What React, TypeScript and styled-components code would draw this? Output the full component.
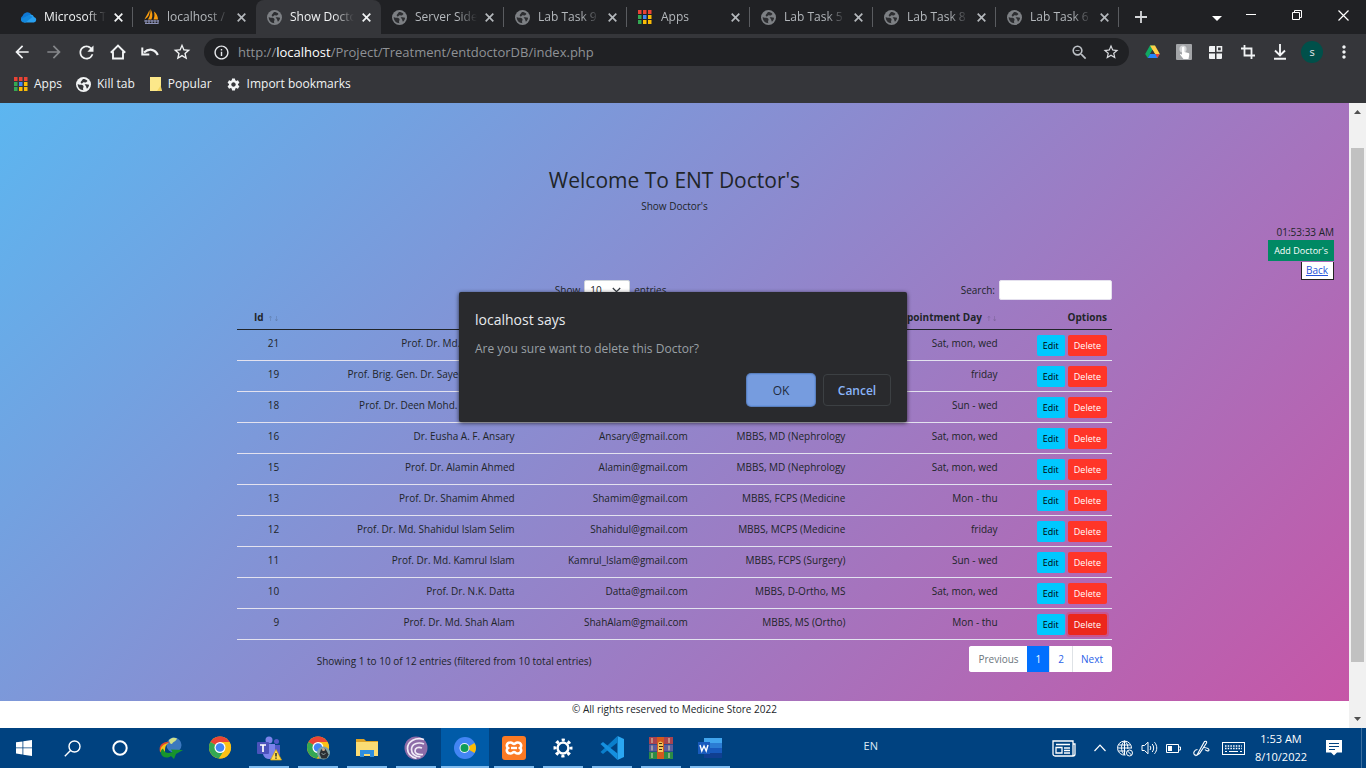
import React from "react";
import styled, { createGlobalStyle, css } from "styled-components";
import {
  MdArrowBack,
  MdArrowForward,
  MdInfoOutline,
  MdMoreVert,
  MdRefresh,
  MdSettings,
  MdStarBorder,
  MdZoomOut,
} from "react-icons/md";

const GlobalStyle = createGlobalStyle`
  *, *::before, *::after { box-sizing: border-box; }
  body {
    margin: 0;
    font-family: "Open Sans", "Noto Sans", sans-serif;
    background: #004280;
  }
  button, input, select { font: inherit; margin: 0; }
  h1, h2, p { margin: 0; }
`;

const Screen = styled.div`
  min-height: 100vh;
  display: flex;
  flex-direction: column;
  overflow: hidden;
`;

/* ---------- browser frame ---------- */

const TabStrip = styled.div`
  display: flex;
  height: 34px;
  padding-left: 10px;
  background: #202124;
`;

const Tab = styled.button<{ $active?: boolean; $bright?: boolean; $divider?: boolean }>`
  display: flex;
  align-items: center;
  gap: 8px;
  width: ${(p) => (p.$active ? 125 : 123)}px;
  flex: none;
  height: 34px;
  padding: 0 10px;
  border: 0;
  background: none;
  color: ${(p) => (p.$active || p.$bright ? "#f1f3f4" : "#b4b8bc")};
  font-size: 12px;
  line-height: 16px;
  text-align: left;
  ${(p) =>
    p.$divider &&
    css`
      background: linear-gradient(#5a5c60, #5a5c60) right center / 1px 20px no-repeat;
    `}
  ${(p) =>
    p.$active &&
    css`
      background: #35363a;
      border-radius: 8px 8px 0 0;
    `}
`;

const TabTitle = styled.span`
  flex: 1;
  min-width: 0;
  overflow: hidden;
  white-space: nowrap;
  mask-image: linear-gradient(to right, #000 68%, transparent);
`;

const IconSlot = styled.span`
  display: inline-flex;
  flex: none;
  width: 16px;
  height: 16px;
  align-items: center;
  justify-content: center;
  svg { display: block; flex: none; }
`;

const StripButton = styled.button<{ $width: number }>`
  display: flex;
  align-items: center;
  justify-content: center;
  width: ${(p) => p.$width}px;
  height: 34px;
  padding: 0;
  border: 0;
  background: none;
  color: #fff;
`;

const WindowButtons = styled.div`
  display: flex;
  margin-left: auto;
  button { height: 30px; }
  button:first-child { height: 36px; }
`;

const Toolbar = styled.div`
  display: flex;
  align-items: center;
  height: 36px;
  padding: 0 6px;
  background: #35363a;
  color: #f1f3f4;
`;

const ToolButton = styled.button<{ $dim?: boolean }>`
  display: flex;
  align-items: center;
  justify-content: center;
  width: 32px;
  height: 28px;
  padding: 0;
  border: 0;
  background: none;
  color: ${(p) => (p.$dim ? "#85878a" : "#f1f3f4")};
`;

const AddressBar = styled.div`
  display: flex;
  align-items: center;
  flex: 1;
  height: 28px;
  margin: 0 7px 0 6px;
  padding: 0 2px 0 9px;
  border-radius: 14px;
  background: #202124;
  color: #e8eaed;
`;

const Url = styled.a`
  flex: 1;
  margin-left: 8px;
  color: #8f9296;
  font-size: 13px;
  line-height: 20px;
  text-decoration: none;
  span { color: #fff; }
`;

const Avatar = styled.span`
  width: 22px;
  height: 22px;
  border-radius: 50%;
  background: #00504a;
  color: #e8eaed;
  font-size: 11px;
  line-height: 22px;
  text-align: center;
`;

const BookmarkBar = styled.nav`
  display: flex;
  align-items: center;
  gap: 14px;
  height: 33px;
  padding: 0 14px 5px;
  background: #35363a;
`;

const Bookmark = styled.a`
  display: flex;
  align-items: center;
  gap: 6px;
  color: #f1f3f4;
  font-size: 12px;
  line-height: 16px;
  text-decoration: none;
`;

/* ---------- page ---------- */

const Viewport = styled.div`
  position: relative;
  display: flex;
  flex: 1;
`;

const Page = styled.main`
  flex: 1;
  display: flex;
  flex-direction: column;
  background: #fff;
  color: #212529;
  font-size: 10px;
  line-height: 16px;
`;

const Hero = styled.div`
  flex: 1;
  padding: 64px 15px 27px;
  background: linear-gradient(135deg, #5cb6f0, #c656a7);
`;

const Heading = styled.h1`
  font-size: 21px;
  line-height: 26px;
  font-weight: 500;
  text-align: center;
`;

const SubHeading = styled.p`
  margin-top: 5px;
  text-align: center;
`;

const Corner = styled.div`
  display: flex;
  flex-direction: column;
  align-items: flex-end;
  margin-top: 10px;
`;

const SmallButton = styled.button<{ $kind: "add" | "edit" | "delete"; $pressed?: boolean }>`
  height: 21px;
  padding: 0 6px;
  border: 0;
  border-radius: ${(p) => (p.$kind === "add" ? 0 : 2)}px;
  font-size: 9px;
  line-height: 21px;
  color: ${(p) => (p.$kind === "edit" ? "#000" : "#fff")};
  background: ${(p) =>
    p.$kind === "add" ? "#008964" : p.$kind === "edit" ? "#00c8ff" : p.$pressed ? "#ec271c" : "#ff3528"};
  ${(p) =>
    p.$pressed &&
    css`
      box-shadow: 0 0 0 2px rgba(230, 60, 90, 0.4);
    `}
`;

const BackLink = styled.a`
  margin-top: 1px;
  padding: 0 5px 0 4px;
  border: 1px solid #222;
  border-width: 0 1px 1px 1px;
  background: #fff;
  color: #2453d8;
  line-height: 17px;
`;

const Listing = styled.section`
  width: 100%;
  max-width: 875px;
  margin: 0 auto;
`;

const Controls = styled.div`
  display: grid;
  grid-template-columns: 1fr 1fr;
  height: 20px;
  margin-bottom: 4px;
`;

const ControlLabel = styled.label<{ $inset?: boolean }>`
  display: flex;
  align-items: center;
  justify-content: flex-end;
  gap: 4px;
  padding-right: ${(p) => (p.$inset ? 8 : 0)}px;
`;

const SelectBox = styled.span`
  position: relative;
  display: inline-flex;
  svg {
    position: absolute;
    right: 9px;
    top: 6px;
    pointer-events: none;
  }
`;

const LengthSelect = styled.select`
  width: 46px;
  height: 20px;
  padding: 0 5px;
  border: 1px solid #ced4da;
  border-radius: 2px;
  background: #fff;
  color: #212529;
  appearance: none;
`;

const SearchInput = styled.input`
  width: 113px;
  height: 20px;
  border: 1px solid #e4e0ee;
  border-radius: 2px;
  background: #fff;
`;

const Table = styled.table`
  width: 100%;
  table-layout: fixed;
  border-collapse: separate;
  border-spacing: 0;
  text-align: right;
  white-space: nowrap;
  th, td {
    padding: 5px 5px 4px;
    vertical-align: top;
    font-weight: 400;
  }
  th {
    border-bottom: 1px solid #212529;
    font-weight: 700;
  }
  td { border-bottom: 1px solid #e3e2ef; }
`;

const Col = styled.col<{ $share: number }>`
  width: ${(p) => p.$share}%;
`;

const SortMark = styled.span`
  margin-left: 4px;
  font-family: "DejaVu Sans", sans-serif;
  font-weight: 400;
  font-size: 7px;
  line-height: 1;
  opacity: 0.25;
`;

const Actions = styled.div`
  display: flex;
  justify-content: flex-end;
  gap: 3px;
`;

const TableFoot = styled.div`
  display: grid;
  grid-template-columns: 5fr 7fr;
  align-items: center;
  margin-top: 6px;
`;

const Info = styled.p`
  padding: 4px 10px 0 0;
  text-align: right;
`;

const Pager = styled.nav`
  display: flex;
  justify-self: end;
  height: 26px;
  border-radius: 3px;
  overflow: hidden;
  background: #fff;
`;

const PageLink = styled.a<{ $current?: boolean; $muted?: boolean }>`
  padding: 0 8px;
  border-left: 1px solid ${(p) => (p.$current ? "#0170fe" : "#dee2e6")};
  background: ${(p) => (p.$current ? "#0170fe" : "#fff")};
  color: ${(p) => (p.$current ? "#fff" : p.$muted ? "#6c757d" : "#2b62e8")};
  line-height: 26px;
  text-decoration: none;
  &:first-child { border-left-color: #fff; }
  &:last-child { padding-right: 9px; }
`;

const Footer = styled.footer`
  height: 27px;
  text-align: center;
`;

const ScrollBar = styled.div`
  display: flex;
  flex-direction: column;
  align-items: center;
  justify-content: space-between;
  width: 17px;
  padding: 7px 0;
  background: #f1f1f1;
`;

const ScrollTrack = styled.div`
  flex: 1;
  width: 13px;
  margin: 34px 0 55px;
  background: #c1c1c1;
`;

/* ---------- confirm dialog ---------- */

const Dialog = styled.div`
  position: absolute;
  top: 189px;
  left: 50%;
  width: 448px;
  margin-left: -224px;
  padding: 16px;
  border-radius: 2px;
  background: #292a2d;
  box-shadow: 0 1px 4px rgba(0, 0, 0, 0.7);
`;

const DialogTitle = styled.h2`
  color: #e8eaed;
  font-size: 14px;
  font-weight: 400;
  line-height: 24px;
`;

const DialogText = styled.p`
  margin-top: 7px;
  color: #9aa0a6;
  font-size: 12px;
  line-height: 20px;
`;

const DialogButtons = styled.div`
  display: flex;
  justify-content: flex-end;
  gap: 8px;
  margin-top: 15px;
`;

const DialogButton = styled.button<{ $primary?: boolean }>`
  width: 68px;
  height: 32px;
  padding: 0;
  border: 1px solid ${(p) => (p.$primary ? "#6a95dd" : "#3c4043")};
  border-radius: 4px;
  background: ${(p) => (p.$primary ? "#769cdf" : "none")};
  color: ${(p) => (p.$primary ? "#202b3d" : "#8ab4f8")};
  font-size: 12px;
  font-weight: 600;
  ${(p) =>
    p.$primary &&
    css`
      box-shadow: 0 0 0 1px #5a7fbd;
      font-weight: 500;
    `}
`;

/* ---------- taskbar ---------- */

const Taskbar = styled.div`
  display: flex;
  height: 40px;
  background: #004280;
  color: #fff;
`;

const StartGroup = styled.div`
  display: flex;
  margin-right: 3px;
`;

const AppGroup = styled.div`
  display: flex;
  gap: 1px;
`;

const TaskButton = styled.button<{ $open?: boolean; $active?: boolean }>`
  display: flex;
  align-items: center;
  justify-content: center;
  width: 48px;
  height: 40px;
  padding: 0;
  border: 0;
  color: #fff;
  background: ${(p) => (p.$active ? "#005ba8" : "none")};
  ${(p) =>
    p.$open &&
    css`
      background-image: linear-gradient(#7fbcf0, #7fbcf0);
      background-size: ${p.$active ? 48 : 40}px 2px;
      background-position: center bottom;
      background-repeat: no-repeat;
    `}
`;

const Language = styled.span`
  margin-left: auto;
  margin-right: 168px;
  color: #dce9f5;
  font-size: 11px;
  line-height: 36px;
`;

const Tray = styled.div`
  display: flex;
  align-items: center;
  padding-right: 8px;
  border-right: 1px solid #3b6fa0;
  margin-right: 4px;
`;

const TrayButton = styled.button<{ $width: number }>`
  display: flex;
  align-items: center;
  justify-content: center;
  width: ${(p) => p.$width}px;
  height: 40px;
  padding: 0;
  border: 0;
  background: none;
  color: #fff;
  svg { flex: none; }
`;

const Clock = styled.div`
  width: 68px;
  margin-left: 4px;
  text-align: center;
  font-size: 11px;
  line-height: 18px;
`;

/* ---------- drawings ---------- */

const CloseGlyph = () => (
  <svg width="9" height="9" viewBox="0 0 9 9" stroke="currentColor" strokeWidth="1.7">
    <path d="M.7.7l7.6 7.6M8.3.7L.7 8.3" />
  </svg>
);

const DotGrid = () => {
  const colors = ["#ea4335", "#ea4335", "#ea4335", "#34a853", "#4285f4", "#fbbc05", "#34a853", "#fbbc05", "#fbbc05"];
  return (
    <svg width="14" height="14" viewBox="0 0 14 14">
      {colors.map((c, i) => (
        <rect key={i} x={(i % 3) * 5} y={Math.floor(i / 3) * 5} width="3.500" height="4" fill={c} />
      ))}
    </svg>
  );
};

const Globe = ({ color, land = "#202124" }: { color: string; land?: string }) => (
  <svg width="15" height="15" viewBox="0 0 14 14">
    <circle cx="7" cy="7" r="7" fill={color} />
    <path d="M1.600 6.600C3 8 5.500 6.300 6.800 8.100 7.700 9.400 5.800 10.400 7 12.300 4 12.300 1.500 10 1.600 6.600z" fill={land} />
    <path d="M6.500 1.800c1.200-.1 3.200.4 4.300 1.900L9.200 5.200 6.800 4.900 5.400 6.300 4.200 5zM8 6.900c1.500-.3 3-.1 4.200.3-.1 1.600-.9 3-2 3.700-.8-1.600-.2-2.300-2.200-4z" fill={land} />
  </svg>
);

const Cloud = () => (
  <svg width="17" height="12" viewBox="0 0 17 12">
    <path d="M3 10.500A3 3 0 0 1 2.500 5 5 5 0 0 1 11 3l-1 6z" fill="#0f78d4" />
    <path d="M5 6.500L11 3.500a4 4 0 0 1 3 2.500 2.800 2.800 0 0 1 0 5.500H4z" fill="#28a0f0" />
    <path d="M5 6l4.500-2 3 2-7 5.500H4A3.300 3.300 0 0 1 1 8z" fill="#1488dc" />
  </svg>
);

const Sails = () => (
  <svg width="17" height="16" viewBox="0 0 17 16">
    <path d="M6.500 1c.6 3-.5 7-5 9.500 1-2.500 3-5 5-9.500zM7.500 0c2 3 2.500 7 1 10.500H5c1.800-3 2.700-6 2.500-10.500zM11 2.500c2.500 1.500 4 5 4 8h-4.500c1.200-2.500 1.200-5 .5-8z" fill="#f89c0e" />
    <path d="M1 12h15M2 14.500h13M3 11v4M6 11v4M9 11v4M12 11v4M15 11v4" stroke="#8b90b5" strokeWidth="1.200" />
  </svg>
);

const Drive = () => (
  <svg width="15" height="14" viewBox="0 0 15 14">
    <path d="M5 .5h5L5.200 9 2.700 13 .2 9z" fill="#11a861" />
    <path d="M5 .5h5L14.800 9H9.800z" fill="#ffcf48" />
    <path d="M5.200 9h9.600l-2.500 4H2.700z" fill="#2684fc" />
    <path d="M10.300 9h4.500l-2.500 4z" fill="#ea4335" />
    <path d="M7.500 4.900L9.900 9H5.200z" fill="#35363a" />
  </svg>
);

const TouchCard = () => (
  <svg width="16" height="16" viewBox="0 0 16 16">
    <rect width="16" height="16" rx="1" fill="#a3a5a8" />
    <circle cx="7" cy="5" r="3.600" fill="#d3d5d7" />
    <path d="M6 4a1.200 1.200 0 0 1 2.400 0v4l4 1c1 .3 1 1 .8 2L12.500 15H7.500L4 10.500c.2-.8 1-.6 2 .2z" fill="#fff" />
  </svg>
);

const Blocks = () => (
  <svg width="14" height="13" viewBox="0 0 14 13" fill="#f1f3f4">
    <path d="M1 0h5v6H0V1a1 1 0 0 1 1-1zM0 7.500h6V13H1a1 1 0 0 1-1-1zM7.500 7.500H13V12a1 1 0 0 1-1 1H7.500z" />
    <path d="M8.300.8h4.200V5H8.300z" fill="none" stroke="#f1f3f4" strokeWidth="1.500" />
  </svg>
);

const Note = () => (
  <svg width="13" height="14" viewBox="0 0 13 14">
    <path d="M1 0h11v10l1 4H1z" fill="#fce88a" />
    <path d="M12 8v6H8z" fill="#f3d45e" />
  </svg>
);

const ChromeMark = ({ badge }: { badge?: boolean }) => (
  <svg width="24" height="24" viewBox="0 0 24 24">
    <circle cx="12" cy="11.500" r="11" fill="#fbc116" />
    <path d="M12 11.500L2.500 6A11 11 0 0 1 21.500 6z" fill="#ea4335" />
    <path d="M2.500 6A11 11 0 0 0 11 22.450L16.500 14z L12 11.500z" fill="#34a853" />
    <path d="M12 6h9.500A11 11 0 0 1 11 22.450L16.700 14z" fill="#fbc116" />
    <circle cx="12" cy="11.500" r="5.500" fill="#fff" />
    <circle cx="12" cy="11.500" r="4.300" fill="#4285f4" />
    {badge && (
      <g>
        <circle cx="17.500" cy="17" r="6.500" fill="#7fa3a5" />
        <path d="M15 13.500l4-1 2 3 1.500 3-2 4h-5l-2-4.500z" fill="#2b2f33" />
        <circle cx="17.500" cy="13.500" r="1.500" fill="#c9a88c" />
        <path d="M15.500 17.500l2 1 2-1" stroke="#9fb6b8" fill="none" strokeWidth=".8" />
      </g>
    )}
  </svg>
);

const DownloadGlobe = () => (
  <svg width="24" height="22" viewBox="0 0 24 22">
    <circle cx="15" cy="8" r="7.500" fill="#3c78bf" />
    <path d="M10 3c3-3 6-2.500 8-1.500-1 3-4 3-5 5.500-2 0-3-2-3-4z" fill="#cfe08a" />
    <path d="M1 15C-1 8 5 4 11 5c-4 1-6 4-6 9z" fill="#e0472c" />
    <path d="M2 16C0 10 5 6.500 10 6c-4 2-4 5-4 9z" fill="#f2c21b" />
    <path d="M2 16.500c1 4 6 5.500 10 2.500l3 3 2-5 7-4-12-.5 1.500 2.500C9 17 5.500 16 4 11.500c-2 1-2.500 3-2 5z" fill="#17952c" />
  </svg>
);

const Teams = () => (
  <svg width="26" height="25" viewBox="0 0 26 25">
    <circle cx="13" cy="4" r="3.500" fill="#7b83eb" />
    <circle cx="20.500" cy="5.500" r="2.500" fill="#5059c9" />
    <path d="M16 9h8v7a4 4 0 0 1-8 2z" fill="#5059c9" />
    <path d="M7 8h12v8a6 6 0 0 1-12 2z" fill="#7b83eb" />
    <rect x="1" y="6" width="12" height="12" rx="1" fill="#4b53bc" />
    <path d="M4 9h6M7 9v7" stroke="#fff" strokeWidth="1.700" />
    <path d="M20 13.500l5.500 10.500h-11z" fill="#ffdc52" stroke="#d9a400" strokeWidth=".7" />
    <path d="M20 17v3.500M20 21.500v1.200" stroke="#222" strokeWidth="1.400" />
  </svg>
);

const FolderMark = () => (
  <svg width="22" height="20" viewBox="0 0 22 20">
    <path d="M0 1h8l2 2h12v4H0z" fill="#dfa325" />
    <path d="M0 4h22v14H0z" fill="#fbdc74" />
    <path d="M4 19v-7h14v7h-4v-3H8v3z" fill="#2f8fe0" />
  </svg>
);

const Swirl = () => (
  <svg width="24" height="24" viewBox="0 0 24 24" fill="none">
    <circle cx="12" cy="12" r="11.500" fill="#8d6ca8" />
    <path d="M20 3.500C12 1 3.500 5 3.500 12.500c0 5 4 8.500 9 10M20 8c-6-2.500-12.500 0-12.500 5.500 0 4.500 4 7 9 7.500M18 12c-4-1.500-7 0-7 3 0 2.500 3 4 8 3.500" stroke="#f0eaf6" strokeWidth="1.700" />
  </svg>
);

const BlueTabs = () => (
  <svg width="24" height="24" viewBox="0 0 24 24">
    <circle cx="12" cy="12" r="11" fill="#4285f4" />
    <path d="M13 12l8.500-5c2 3 2 7 0 10z" fill="#fbbc05" />
    <circle cx="11.500" cy="12" r="5" fill="#e8f1fb" />
    <circle cx="11.500" cy="12" r="4" fill="#0f9d58" />
  </svg>
);

const OrangeBlock = () => (
  <svg width="24" height="24" viewBox="0 0 24 24" fill="none">
    <rect width="24" height="24" rx="3" fill="#fb7a24" />
    <path d="M8.500 6.500c-4 0-4.500 4-2.500 5.500-2 1.500-1.500 5.500 2.500 5.500 2 0 2-1.500 3.500-1.500s1.500 1.500 3.500 1.500c4 0 4.500-4 2.500-5.500 2-1.500 1.500-5.500-2.500-5.500-2 0-2 1.500-3.500 1.500S10.500 6.500 8.500 6.500z" stroke="#fff" strokeWidth="2.600" />
    <path d="M9 12h6" stroke="#fff" strokeWidth="2.400" />
  </svg>
);

const GearOutline = () => (
  <svg width="20" height="20" viewBox="0 0 20 20" fill="none" stroke="#fff">
    <circle cx="10" cy="10" r="5.400" strokeWidth="2.400" />
    <circle cx="10" cy="10" r="8" strokeWidth="3" strokeDasharray="3.140 3.140" strokeDashoffset="1.570" />
  </svg>
);

const CodeMark = () => (
  <svg width="24" height="24" viewBox="0 0 24 24">
    <path d="M17.500 0L24 3v18l-6.500 3z" fill="#2aa7f2" />
    <path d="M17.500 0v6.500L3 18 .5 16z" fill="#0a7fcc" />
    <path d="M17.500 24v-6.500L3 6 .5 8z" fill="#1590df" />
  </svg>
);

const Books = () => (
  <svg width="24" height="22" viewBox="0 0 24 22">
    <rect y="0" width="24" height="7" fill="#a9434f" />
    <rect y="7.500" width="24" height="7" fill="#5c5c9c" />
    <rect y="15" width="24" height="7" fill="#2c8b46" />
    <path d="M3 1v5M3 8.500v5M3 16v5M20 1v5M20 8.500v5M20 16v5" stroke="#e0d8b0" strokeWidth="1" />
    <rect x="8" width="7" height="22" fill="#d2591e" />
    <path d="M9 15V7a2.500 2.500 0 0 1 5 0v8z" fill="#f0c75c" />
    <path d="M10 6.500h3M10 9.500h4M10 12.500h3" stroke="#4a2a10" />
  </svg>
);

const WordMark = () => (
  <svg width="24" height="20" viewBox="0 0 24 20">
    <path d="M6 0h18v5H6z" fill="#41a5ee" />
    <path d="M6 5h18v5H6z" fill="#2b7cd3" />
    <path d="M6 10h18v5H6z" fill="#185abd" />
    <path d="M6 15h18v5H6z" fill="#103f91" />
    <rect y="4" width="12" height="12" fill="#185abd" />
    <path d="M2 7l1.800 6L6 8l2.200 5L10 7" fill="none" stroke="#fff" strokeWidth="1.400" />
  </svg>
);

/* ---------- data ---------- */

const pageGlobe = <Globe color="#7d8084" land="#2d2e31" />;

const tabs = [
  { title: "Microsoft Teams", icon: <Cloud />, bright: true, divider: true },
  { title: "localhost / 127", icon: <Sails /> },
  { title: "Show Doctor", icon: pageGlobe, active: true },
  { title: "Server Side Val", icon: pageGlobe, divider: true },
  { title: "Lab Task 9 (F", icon: pageGlobe, divider: true },
  { title: "Apps", icon: <DotGrid />, divider: true },
  { title: "Lab Task 5 (F", icon: pageGlobe, divider: true },
  { title: "Lab Task 8 (F", icon: pageGlobe, divider: true },
  { title: "Lab Task 6 (F", icon: pageGlobe, divider: true },
];

const doctors = [
  [21, "Prof. Dr. Md. Abu Hanifa", "Hanif@gmail.com", "MBBS, FCPS", "Sat, mon, wed"],
  [19, "Prof. Brig. Gen. Dr. Sayed Ahmed Ali", "Sayed@gmail.com", "MBBS, FCPS", "friday"],
  [18, "Prof. Dr. Deen Mohd. Noorul Huq", "Deen@gmail.com", "MBBS, MD", "Sun - wed"],
  [16, "Dr. Eusha A. F. Ansary", "Ansary@gmail.com", "MBBS, MD (Nephrology", "Sat, mon, wed"],
  [15, "Prof. Dr. Alamin Ahmed", "Alamin@gmail.com", "MBBS, MD (Nephrology", "Sat, mon, wed"],
  [13, "Prof. Dr. Shamim Ahmed", "Shamim@gmail.com", "MBBS, FCPS (Medicine", "Mon - thu"],
  [12, "Prof. Dr. Md. Shahidul Islam Selim", "Shahidul@gmail.com", "MBBS, MCPS (Medicine", "friday"],
  [11, "Prof. Dr. Md. Kamrul Islam", "Kamrul_Islam@gmail.com", "MBBS, FCPS (Surgery)", "Sun - wed"],
  [10, "Prof. Dr. N.K. Datta", "Datta@gmail.com", "MBBS, D-Ortho, MS", "Sat, mon, wed"],
  [9, "Prof. Dr. Md. Shah Alam", "ShahAlam@gmail.com", "MBBS, MS (Ortho)", "Mon - thu"],
];

const columns = ["Id", "Name", "Email", "Degree", "Appointment Day"];
const shares = [5.4, 26.9, 19.8, 18, 17.4, 12.5];

const apps = [
  { name: "Download manager", icon: <DownloadGlobe /> },
  { name: "Chrome", icon: <ChromeMark /> },
  { name: "Teams", icon: <Teams />, open: true },
  { name: "Chrome profile", icon: <ChromeMark badge />, open: true },
  { name: "File Explorer", icon: <FolderMark />, open: true },
  { name: "Torrent client", icon: <Swirl />, open: true },
  { name: "Browser", icon: <BlueTabs />, open: true, active: true },
  { name: "Server control panel", icon: <OrangeBlock />, open: true },
  { name: "Settings", icon: <GearOutline />, open: true },
  { name: "Code editor", icon: <CodeMark />, open: true },
  { name: "Archiver", icon: <Books />, open: true },
  { name: "Word", icon: <WordMark />, open: true },
];

/* ---------- sections ---------- */

const BrowserFrame = () => (
  <header>
    <TabStrip>
      {tabs.map((t) => (
        <Tab key={t.title} $active={t.active} $bright={t.bright} $divider={t.divider}>
          <IconSlot>{t.icon}</IconSlot>
          <TabTitle>{t.title}</TabTitle>
          <CloseGlyph />
        </Tab>
      ))}
      <StripButton $width={44} aria-label="New tab">
        <svg width="12" height="12" viewBox="0 0 12 12" stroke="#d5d7da" strokeWidth="1.800">
          <path d="M6 0v12M0 6h12" />
        </svg>
      </StripButton>
      <WindowButtons>
        <StripButton $width={22} aria-label="Search tabs">
          <svg width="10" height="5" viewBox="0 0 10 5"><path d="M0 0h10L5 5z" fill="#fff" /></svg>
        </StripButton>
        <StripButton $width={46} aria-label="Minimize">
          <svg width="10" height="10" viewBox="0 0 10 10"><path d="M0 4.500h10" stroke="#fff" /></svg>
        </StripButton>
        <StripButton $width={46} aria-label="Restore">
          <svg width="10" height="10" viewBox="0 0 10 10" fill="none" stroke="#fff"><path d="M.5 2.500h7v7h-7zM2.500 2.500v-2h7v7h-2" /></svg>
        </StripButton>
        <StripButton $width={46} aria-label="Close">
          <svg width="11" height="11" viewBox="0 0 11 11" stroke="#fff" strokeWidth="1.200"><path d="M.5.5l10 10M10.500.5l-10 10" /></svg>
        </StripButton>
      </WindowButtons>
    </TabStrip>
    <Toolbar>
      <ToolButton aria-label="Back"><MdArrowBack size={20} /></ToolButton>
      <ToolButton $dim aria-label="Forward"><MdArrowForward size={20} /></ToolButton>
      <ToolButton aria-label="Reload"><MdRefresh size={21} /></ToolButton>
      <ToolButton aria-label="Home">
        <svg width="16" height="16" viewBox="0 0 16 16" fill="none" stroke="currentColor" strokeWidth="1.900">
          <path d="M.8 8.700L8 1.600l7.200 7.100M3 7.500v7h10v-7" />
        </svg>
      </ToolButton>
      <ToolButton aria-label="Undo">
        <svg width="18" height="12" viewBox="0 0 18 12" fill="none" stroke="currentColor" strokeWidth="2.200">
          <path d="M3 6.500C8 2 14 3 16.800 9" />
          <path d="M1.300 1.500v7h7" strokeWidth="2" />
        </svg>
      </ToolButton>
      <ToolButton aria-label="Favourites"><MdStarBorder size={20} /></ToolButton>
      <AddressBar>
        <MdInfoOutline size={17} />
        <Url href="#url">http://<span>localhost</span>/Project/Treatment/entdoctorDB/index.php</Url>
        <ToolButton aria-label="Zoom"><MdZoomOut size={19} color="#bdc1c6" /></ToolButton>
        <ToolButton aria-label="Bookmark this page"><MdStarBorder size={18} color="#dadce0" /></ToolButton>
      </AddressBar>
      <ToolButton aria-label="Drive"><Drive /></ToolButton>
      <ToolButton aria-label="Click helper"><TouchCard /></ToolButton>
      <ToolButton aria-label="Extensions"><Blocks /></ToolButton>
      <ToolButton aria-label="Crop">
        <svg width="14" height="14" viewBox="0 0 14 14" fill="none" stroke="currentColor" strokeWidth="1.800">
          <path d="M3.500 0v10.500H14M0 3.500h10.500V14" />
        </svg>
      </ToolButton>
      <ToolButton aria-label="Downloads">
        <svg width="14" height="16" viewBox="0 0 14 16" fill="none" stroke="currentColor" strokeWidth="1.900">
          <path d="M7 0v11M2 6.500l5 5 5-5M1 14.700h12" />
        </svg>
      </ToolButton>
      <ToolButton aria-label="Profile"><Avatar>s</Avatar></ToolButton>
      <ToolButton aria-label="Menu"><MdMoreVert size={20} /></ToolButton>
    </Toolbar>
    <BookmarkBar>
      <Bookmark href="#apps"><DotGrid />Apps</Bookmark>
      <Bookmark href="#kill"><Globe color="#f1f3f4" land="#35363a" />Kill tab</Bookmark>
      <Bookmark href="#popular"><Note />Popular</Bookmark>
      <Bookmark href="#import"><MdSettings size={15} />Import bookmarks</Bookmark>
    </BookmarkBar>
  </header>
);

const DoctorTable = () => (
  <Table>
    <colgroup>{shares.map((s, i) => <Col key={i} $share={s} />)}</colgroup>
    <thead>
      <tr>
        {columns.map((c) => (
          <th key={c} scope="col">{c}<SortMark>↑↓</SortMark></th>
        ))}
        <th scope="col">Options</th>
      </tr>
    </thead>
    <tbody>
      {doctors.map((row) => (
        <tr key={row[0]}>
          {row.map((cell, i) => <td key={i}>{cell}</td>)}
          <td>
            <Actions>
              <SmallButton $kind="edit">Edit</SmallButton>
              <SmallButton $kind="delete" $pressed={row[0] === 9}>Delete</SmallButton>
            </Actions>
          </td>
        </tr>
      ))}
    </tbody>
  </Table>
);

const ConfirmDialog = () => (
  <Dialog role="dialog" aria-labelledby="confirm-title">
    <DialogTitle id="confirm-title">localhost says</DialogTitle>
    <DialogText>Are you sure want to delete this Doctor?</DialogText>
    <DialogButtons>
      <DialogButton $primary>OK</DialogButton>
      <DialogButton>Cancel</DialogButton>
    </DialogButtons>
  </Dialog>
);

const SystemTray = () => (
  <Tray>
    <TrayButton $width={36} aria-label="News">
      <svg width="24" height="17" viewBox="0 0 24 17" fill="none" stroke="#fff" strokeWidth="1.300">
        <path d="M1 1h20v15H3a2 2 0 0 1-2-2zM21 4h2v10a2 2 0 0 1-2 2M4 4.500h14M4 7.500h6v5.500H4zM12 8h6M12 10.500h6M12 13h6" />
      </svg>
    </TrayButton>
    <TrayButton $width={36} aria-label="Hidden icons">
      <svg width="12" height="8" viewBox="0 0 12 8" fill="none" stroke="#fff" strokeWidth="1.200"><path d="M.5 7L6 1.200 11.500 7" /></svg>
    </TrayButton>
    <TrayButton $width={13} aria-label="Network">
      <svg width="16" height="17" viewBox="0 0 16 17" fill="none" stroke="#fff">
        <path d="M8.500 15A7 7 0 1 1 14.500 8.500M7.500 1C3.500 4 3.500 11 7.500 15M7.500 1c3 2 3.500 5 3.300 8M7.500 1v14M1.500 5h12M1 8h13M1.500 11h7" />
        <circle cx="12.500" cy="13" r="3" /><path d="M10.500 11l4 4" />
      </svg>
    </TrayButton>
    <TrayButton $width={36} aria-label="Volume">
      <svg width="17" height="14" viewBox="0 0 17 14" fill="none" stroke="#fff">
        <path d="M1 4.500h2.500L7 1.200v11.600L3.500 9.500H1zM9 5c1 1.300 1 2.700 0 4M11.200 3c2 2.500 2 5.500 0 8M13.500 1.200c3 3.700 3 8 0 11.600" />
      </svg>
    </TrayButton>
    <TrayButton $width={13} aria-label="Battery">
      <svg width="15" height="9" viewBox="0 0 15 9" fill="none" stroke="#fff">
        <path d="M.5.5h12v8H.5zM13 3h1.500v3H13" /><rect x="2" y="2" width="4" height="5" fill="#fff" stroke="none" />
      </svg>
    </TrayButton>
    <TrayButton $width={43} aria-label="Pen">
      <svg width="17" height="17" viewBox="0 0 17 17" fill="none" stroke="#fff" strokeWidth="1.100">
        <path d="M4 15L11.500 1.500c1.500-.8 2.500.2 2 1.500L6.500 13.500zM4.500 9.500C1 10 0 13 1.500 14.800c1.500 1 3 .5 4-1M11 7.500c3 .3 5 1 5 2.500s-3 1-4-.5" />
      </svg>
    </TrayButton>
    <TrayButton $width={20} aria-label="Keyboard">
      <svg width="23" height="13" viewBox="0 0 23 13" fill="none" stroke="#fff">
        <rect x=".5" y=".5" width="22" height="12" /><path d="M3 4h17M3 6.500h17" strokeDasharray="1.500 1.200" strokeWidth="1.300" /><path d="M3 9.500h2M7 9.500h9M18 9.500h2" />
      </svg>
    </TrayButton>
    <Clock>1:53 AM<br />8/10/2022</Clock>
    <TrayButton $width={38} aria-label="Notifications">
      <svg width="16" height="16" viewBox="0 0 16 16"><path d="M0 0h16v12.500h-5L8 15.500l-3-3H0z" fill="#fff" /><path d="M3 3.500h10M3 6.500h10M3 9.500h6" stroke="#004280" /></svg>
    </TrayButton>
  </Tray>
);

export default function App() {
  return (
    <Screen>
      <GlobalStyle />
      <BrowserFrame />
      <Viewport>
        <Page>
          <Hero>
            <Heading>Welcome To ENT Doctor's</Heading>
            <SubHeading>Show Doctor's</SubHeading>
            <Corner>
              <span>01:53:33 AM</span>
              <SmallButton $kind="add">Add Doctor's</SmallButton>
              <BackLink href="#back">Back</BackLink>
            </Corner>
            <Listing>
              <Controls>
                <ControlLabel $inset>
                  Show
                  <SelectBox>
                    <LengthSelect defaultValue="10">
                      <option>10</option>
                      <option>25</option>
                    </LengthSelect>
                    <svg width="9" height="8" viewBox="0 0 9 8" fill="none" stroke="#343a40" strokeWidth="1.300"><path d="M.8 2l3.700 3.700L8.200 2" /></svg>
                  </SelectBox>
                  entries
                </ControlLabel>
                <ControlLabel>
                  Search:
                  <SearchInput type="search" />
                </ControlLabel>
              </Controls>
              <DoctorTable />
              <TableFoot>
                <Info>Showing 1 to 10 of 12 entries (filtered from 10 total entries)</Info>
                <Pager aria-label="Pages">
                  <PageLink href="#prev" $muted>Previous</PageLink>
                  <PageLink href="#1" $current>1</PageLink>
                  <PageLink href="#2">2</PageLink>
                  <PageLink href="#next">Next</PageLink>
                </Pager>
              </TableFoot>
            </Listing>
          </Hero>
          <Footer>© All rights reserved to Medicine Store 2022</Footer>
        </Page>
        <ScrollBar>
          <svg width="7" height="4" viewBox="0 0 7 4"><path d="M0 4h7L3.500 0z" fill="#505050" /></svg>
          <ScrollTrack />
          <svg width="7" height="4" viewBox="0 0 7 4"><path d="M0 0h7L3.500 4z" fill="#505050" /></svg>
        </ScrollBar>
        <ConfirmDialog />
      </Viewport>
      <Taskbar>
        <StartGroup>
          <TaskButton aria-label="Start">
            <svg width="16" height="16" viewBox="0 0 16 16" fill="#fff"><path d="M0 2.300L6.500 1.400v6.100H0zM7.300 1.300L16 0v7.500H7.300zM0 8.300h6.500v6.100L0 13.600zM7.300 8.300H16V16l-8.700-1.300z" /></svg>
          </TaskButton>
          <TaskButton aria-label="Search">
            <svg width="17" height="17" viewBox="0 0 17 17" fill="none" stroke="#fff" strokeWidth="1.400"><circle cx="10.500" cy="6.500" r="5.500" /><path d="M6.500 10.500L.8 16.200" /></svg>
          </TaskButton>
          <TaskButton aria-label="Assistant">
            <svg width="16" height="16" viewBox="0 0 16 16" fill="none" stroke="#fff" strokeWidth="2"><circle cx="8" cy="8" r="6.700" /></svg>
          </TaskButton>
        </StartGroup>
        <AppGroup>
          {apps.map((a) => (
            <TaskButton key={a.name} aria-label={a.name} $open={a.open} $active={a.active}>{a.icon}</TaskButton>
          ))}
        </AppGroup>
        <Language>EN</Language>
        <SystemTray />
      </Taskbar>
    </Screen>
  );
}
